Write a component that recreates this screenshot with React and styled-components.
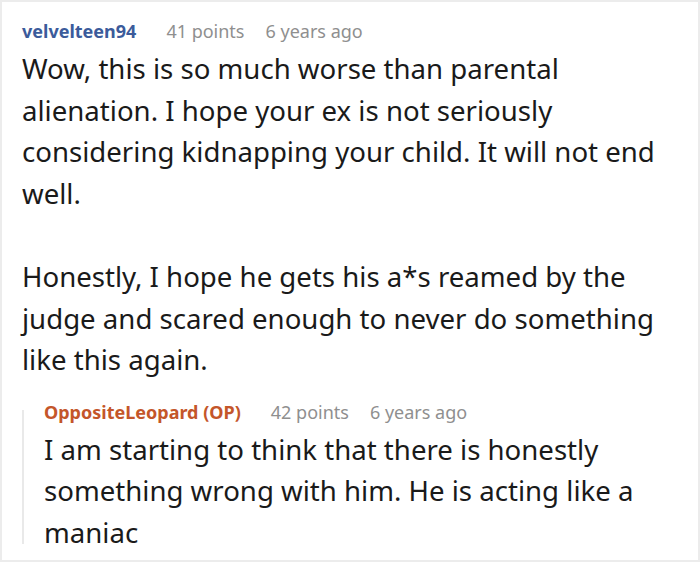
import styled, { createGlobalStyle } from 'styled-components';

const GlobalStyle = createGlobalStyle`
  body {
    margin: 0;
    background: #ffffff;
    font-family: "Noto Sans", "Open Sans", sans-serif;
  }
`;

const Card = styled.section`
  box-sizing: border-box;
  width: 700px;
  height: 562px;
  overflow: hidden;
  border: 2px solid #ececec;
  padding: 14px 30px 0 20px;
  background: #ffffff;
`;

const Meta = styled.div`
  display: flex;
  align-items: baseline;
  font-size: 18px;
  line-height: 30px;
  margin-bottom: 2px;
  white-space: nowrap;
`;

const Author = styled.span`
  font-weight: 700;
  color: ${({ op }) => (op ? '#c4562a' : '#3b5b9b')};
  margin-right: 30px;
`;

const Points = styled.span`
  color: #8f8f8f;
  margin-right: 21px;
`;

const Age = styled.span`
  color: #8f8f8f;
`;

const Body = styled.div`
  font-size: 27.6px;
  line-height: 41.6px;
  color: #1a1a1a;

  p {
    margin: 0 0 41.6px;
  }

  p:last-child {
    margin-bottom: 0;
  }
`;

const Reply = styled.div`
  position: relative;
  margin-top: 16px;
  padding-left: 22px;

  &::before {
    content: '';
    position: absolute;
    left: 0;
    top: 13px;
    height: 134px;
    width: 2px;
    background: #e9e9e9;
  }
`;

function Comment({ author, op, points, age, children }) {
  return (
    <>
      <Meta>
        <Author op={op}>{author}</Author>
        <Points>{points}</Points>
        <Age>{age}</Age>
      </Meta>
      <Body>{children}</Body>
    </>
  );
}

export default function App() {
  return (
    <>
      <GlobalStyle />
      <Card>
        <Comment author="velvelteen94" points="41 points" age="6 years ago">
          <p>
            Wow, this is so much worse than parental alienation. I hope your ex is not
            seriously considering kidnapping your child. It will not end well.
          </p>
          <p>
            Honestly, I hope he gets his a*s reamed by the judge and scared enough to never
            do something like this again.
          </p>
        </Comment>
        <Reply>
          <Comment author="OppositeLeopard (OP)" op points="42 points" age="6 years ago">
            <p>
              I am starting to think that there is honestly something wrong with him. He is
              acting like a maniac
            </p>
          </Comment>
        </Reply>
      </Card>
    </>
  );
}
